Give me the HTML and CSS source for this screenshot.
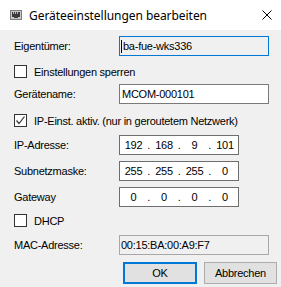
FILE: index.html
```html
<!DOCTYPE html>
<html lang="de">
<head>
<meta charset="utf-8">
<title>Geräteeinstellungen bearbeiten</title>
<link rel="stylesheet" href="styles.css">
</head>
<body>
<div class="window">
  <div class="titlebar">
    <svg class="app-icon" width="12" height="10" viewBox="0 0 12 10">
      <rect x="0.5" y="0.5" width="11" height="9" fill="#c8c8c8" stroke="#7c7c7c"/>
      <rect x="2" y="2" width="8" height="5" fill="#3a3a3a"/>
      <rect x="3" y="2" width="1" height="2" fill="#d8b84a"/>
      <rect x="5" y="2" width="1" height="2" fill="#d8b84a"/>
      <rect x="7" y="2" width="1" height="2" fill="#d8b84a"/>
      <rect x="4" y="7" width="4" height="1" fill="#3a3a3a"/>
    </svg>
    <span class="title">Geräteeinstellungen bearbeiten</span>
    <svg class="close" width="10" height="10" viewBox="0 0 10 10">
      <path d="M0.5 0.5 L9.5 9.5 M9.5 0.5 L0.5 9.5" stroke="#000" stroke-width="1" fill="none"/>
    </svg>
  </div>
  <div class="content">
    <div class="row r-owner">
      <span class="lbl">Eigentümer:</span>
      <div class="field wide focus readonly"><span class="caret"></span>ba-fue-wks336</div>
    </div>
    <div class="check-row r-lock">
      <span class="box"></span><span>Einstellungen sperren</span>
    </div>
    <div class="row r-name">
      <span class="lbl">Gerätename:</span>
      <div class="field wide">MCOM-000101</div>
    </div>
    <div class="check-row r-ipon">
      <span class="box checked">
        <svg width="11" height="11" viewBox="0 0 11 11"><path d="M1.5 5.5 L4 8.5 L9.5 1.5" stroke="#333" stroke-width="1.2" fill="none"/></svg>
      </span><span>IP-Einst. aktiv. (nur in geroutetem Netzwerk)</span>
    </div>
    <div class="row r-ip">
      <span class="lbl">IP-Adresse:</span>
      <div class="field ip">
        <span class="seg">192</span><span class="dot">.</span><span class="seg">168</span><span class="dot">.</span><span class="seg">9</span><span class="dot">.</span><span class="seg">101</span>
      </div>
    </div>
    <div class="row r-mask">
      <span class="lbl">Subnetzmaske:</span>
      <div class="field ip">
        <span class="seg">255</span><span class="dot">.</span><span class="seg">255</span><span class="dot">.</span><span class="seg">255</span><span class="dot">.</span><span class="seg">0</span>
      </div>
    </div>
    <div class="row r-gw">
      <span class="lbl">Gateway</span>
      <div class="field ip">
        <span class="seg">0</span><span class="dot">.</span><span class="seg">0</span><span class="dot">.</span><span class="seg">0</span><span class="dot">.</span><span class="seg">0</span>
      </div>
    </div>
    <div class="check-row r-dhcp">
      <span class="box"></span><span>DHCP</span>
    </div>
    <div class="row r-mac">
      <span class="lbl">MAC-Adresse:</span>
      <div class="field wide disabled">00:15:BA:00:A9:F7</div>
    </div>
    <div class="buttons">
      <button class="btn default">OK</button>
      <button class="btn cancel">Abbrechen</button>
    </div>
  </div>
</div>
</body>
</html>
```
FILE: styles.css
```css
html, body {
  margin: 0;
  padding: 0;
}
body {
  width: 281px;
  height: 287px;
  overflow: hidden;
  background: #f0f0f0;
  font-family: "Liberation Sans", Arial, sans-serif;
  font-size: 11px;
  letter-spacing: -0.25px;
  color: #000;
}
.window {
  width: 281px;
  height: 287px;
  display: flex;
  flex-direction: column;
}
.titlebar {
  height: 30px;
  background: #fff;
  display: flex;
  align-items: center;
  position: relative;
  flex-shrink: 0;
}
.app-icon {
  margin-left: 10px;
  margin-top: 0;
}
.title {
  margin-left: 7px;
  font-family: "Noto Sans", "Open Sans", sans-serif;
  font-size: 12px;
  letter-spacing: -0.05px;
  color: #000;
}
.close {
  margin-left: auto;
  margin-right: 9px;
}
.content {
  flex: 1;
  display: flex;
  flex-direction: column;
  padding-left: 14px;
}
.row {
  display: flex;
  align-items: center;
  height: 20px;
}
.lbl {
  width: 105px;
  flex-shrink: 0;
}
.field {
  box-sizing: border-box;
  height: 20px;
  border: 1px solid #7a7a7a;
  background: #fff;
  display: flex;
  align-items: center;
  padding-left: 2px;
  white-space: nowrap;
}
.field.wide {
  width: 150px;
}
.field.focus {
  border-color: #0078d7;
}
.field.readonly {
  background: #f0f0f0;
  padding-left: 1px;
}
.caret {
  width: 1px;
  height: 13px;
  background: #000;
  margin-right: 1px;
}
.field.disabled {
  background: #f0f0f0;
  border-color: #a8a8a8;
  padding-left: 1px;
  color: #000;
}
.field.ip {
  width: 120px;
  padding-left: 0.5px;
  border-color: #6e6e6e;
}
.seg {
  width: 26px;
  text-align: center;
}
.dot {
  width: 4.5px;
  text-align: center;
}
.check-row {
  display: flex;
  align-items: center;
  height: 13px;
}
.box {
  box-sizing: border-box;
  width: 13px;
  height: 13px;
  border: 1px solid #333;
  background: #fff;
  margin-right: 7px;
  display: flex;
  align-items: center;
  justify-content: center;
  flex-shrink: 0;
}
.box svg {
  display: block;
}
.r-owner { margin-top: 6px; }
.r-lock { margin-top: 9px; }
.r-name { margin-top: 6px; }
.r-ipon { margin-top: 10px; }
.r-ip { margin-top: 8px; }
.r-mask { margin-top: 6px; }
.r-gw { margin-top: 6px; }
.r-dhcp { margin-top: 7px; }
.r-mac { margin-top: 8px; }
.buttons {
  display: flex;
  margin-top: 7px;
  padding-left: 109px;
  gap: 7px;
}
.btn {
  box-sizing: border-box;
  height: 22px;
  background: #e1e1e1;
  border: 1px solid #adadad;
  font-family: "Liberation Sans", Arial, sans-serif;
  font-size: 11px;
  letter-spacing: -0.25px;
  color: #000;
  padding: 0;
  margin: 0;
}
.btn.default {
  width: 74px;
  border: 2px solid #0078d7;
}
.btn.cancel {
  width: 73px;
}
```
